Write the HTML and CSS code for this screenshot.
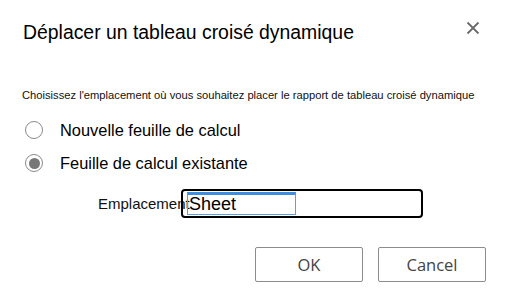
FILE: index.html
```html
<!DOCTYPE html>
<html lang="fr">
<head>
<meta charset="utf-8">
<link rel="stylesheet" href="styles.css">
</head>
<body>
<div class="dialog">
  <div class="header">
    <h1 class="title">Déplacer un tableau croisé dynamique</h1>
    <button class="close" aria-label="Fermer">
      <svg width="14" height="14" viewBox="0 0 14 14"><path d="M1.5 1.5 L12.5 12.5 M12.5 1.5 L1.5 12.5" stroke="#6b6b6b" stroke-width="1.8" fill="none"/></svg>
    </button>
  </div>
  <p class="hint">Choisissez l'emplacement où vous souhaitez placer le rapport de tableau croisé dynamique</p>
  <div class="options">
    <label class="opt"><span class="radio"></span><span class="opt-text">Nouvelle feuille de calcul</span></label>
    <label class="opt"><span class="radio checked"></span><span class="opt-text">Feuille de calcul existante</span></label>
  </div>
  <div class="location">
    <span class="loc-label">Emplacement</span>
    <div class="loc-input"><span class="sel">Sheet</span></div>
  </div>
  <div class="buttons">
    <button class="btn">OK</button>
    <button class="btn">Cancel</button>
  </div>
</div>
</body>
</html>
```
FILE: styles.css
```css
html, body { margin: 0; padding: 0; background: #fff; }
body { width: 508px; height: 304px; overflow: hidden; font-family: "Liberation Sans", Arial, sans-serif; color: #000; }
.dialog { display: flex; flex-direction: column; }
.header { display: flex; align-items: flex-start; justify-content: space-between; padding: 20px 28px 0 23px; height: 46px; box-sizing: border-box; }
.title { margin: 0; font-size: 19.4px; font-weight: normal; line-height: 24px; }
.close { border: 0; background: none; padding: 0; margin-top: 1px; width: 14px; height: 14px; display: flex; }
.hint { margin: 42px 0 0 22px; font-size: 11.2px; line-height: 14px; color: #111; white-space: nowrap; }
.options { display: flex; flex-direction: column; gap: 13px; margin: 18px 0 0 25px; }
.opt { display: flex; align-items: center; gap: 17px; height: 20px; }
.radio { width: 18px; height: 18px; border: 1px solid #8a8a8a; border-radius: 50%; box-sizing: border-box; display: flex; align-items: center; justify-content: center; }
.radio.checked::after { content: ""; width: 11px; height: 11px; border-radius: 50%; background: #777; }
.opt-text { font-size: 16.4px; }
.location { display: flex; align-items: center; margin: 16px 0 0 98px; }
.loc-label { font-size: 15px; color: #111; width: 83px; white-space: nowrap; }
.loc-input { position: relative; background: transparent; width: 242px; height: 29px; border: 2px solid #000; border-radius: 4px; box-sizing: border-box; padding: 1px 0 0 4px; display: flex; }
.sel { width: 109px; height: 23px; box-sizing: border-box; border: 1px solid #5aa0e6; border-top: 3px solid #3d8ee0; font-size: 18px; line-height: 18px; padding-left: 1px; }
.buttons { display: flex; justify-content: flex-end; gap: 15px; margin: 29px 22px 0 0; }
.btn { width: 108px; height: 35px; border: 1px solid #8c8c8c; border-radius: 2px; background: #fff; font-family: "Open Sans", "Noto Sans", sans-serif; font-size: 16.5px; color: #444; padding: 0; }
```
